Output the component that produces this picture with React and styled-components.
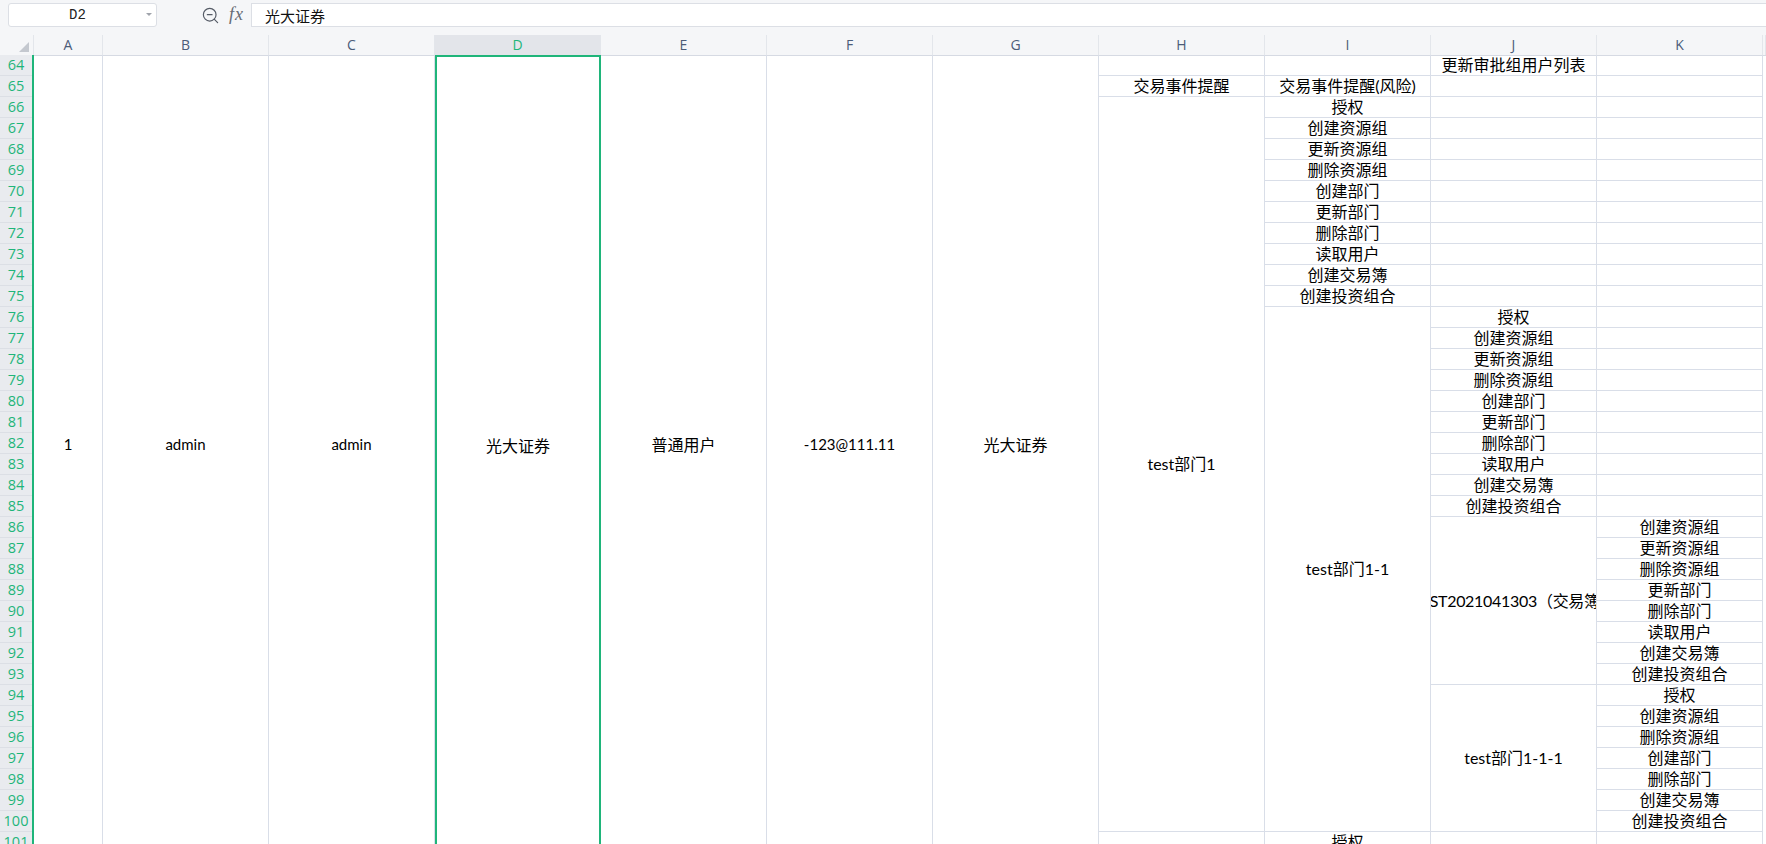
import React from 'react';
import styled, { createGlobalStyle } from 'styled-components';
import { ZoomOut } from 'lucide-react';

const ROW_H = 21;
const GREEN = '#1fb57a';
const GRID = '#d9dee8';

const GlobalStyle = createGlobalStyle`
  html, body {
    margin: 0;
    padding: 0;
    background: #fff;
    overflow: hidden;
  }
  body {
    font-family: "Lato", "Noto Sans CJK SC", sans-serif;
  }
`;

const Page = styled.div`
  width: 1766px;
  height: 844px;
  overflow: hidden;
  background: #fff;
  display: flex;
  flex-direction: column;
`;

const FormulaBar = styled.div`
  height: 35px;
  flex: none;
  box-sizing: border-box;
  padding-top: 3px;
  background: #f5f6f8;
  display: flex;
  align-items: flex-start;
`;

const NameBox = styled.div`
  margin-left: 8px;
  width: 149px;
  height: 24px;
  box-sizing: border-box;
  background: #fff;
  border: 1px solid #dcdfe5;
  border-radius: 3px;
  display: flex;
  align-items: center;
  padding-right: 4px;
`;

const NameText = styled.span`
  flex: 1;
  text-align: center;
  font-family: "Liberation Mono", "DejaVu Sans Mono", monospace;
  font-size: 14px;
  color: #222;
`;

const Caret = styled.span`
  width: 0;
  height: 0;
  border-left: 3px solid transparent;
  border-right: 3px solid transparent;
  border-top: 3px solid #a0a4ab;
  margin-top: -2px;
`;

const ToolIcon = styled.span`
  margin-left: 44px;
  height: 24px;
  display: flex;
  align-items: center;
  color: #555b66;
`;

const Fx = styled.span`
  margin-left: 9px;
  height: 24px;
  line-height: 22px;
  font-family: "Liberation Serif", "DejaVu Serif", serif;
  font-style: italic;
  font-size: 18px;
  letter-spacing: 1px;
  color: #666b74;
`;

const FormulaInput = styled.div`
  margin-left: 7px;
  margin-right: -10px;
  flex: 1;
  height: 24px;
  box-sizing: border-box;
  background: #fff;
  border: 1px solid #dcdfe5;
  padding-left: 13px;
  display: flex;
  align-items: center;
  font-family: "Noto Sans CJK SC", sans-serif;
  font-size: 15px;
  color: #111;
`;

const HeaderRow = styled.div`
  height: 20px;
  flex: none;
  display: flex;
  background: #f5f6f8;
  border-bottom: 1px solid #d6dae3;
`;

const Corner = styled.div`
  width: 34px;
  flex: none;
  position: relative;
  border-right: 1px solid #e3e6eb;
  box-sizing: border-box;
`;

const CornerMark = styled.span`
  position: absolute;
  right: 4px;
  bottom: 3px;
  width: 0;
  height: 0;
  border-left: 10px solid transparent;
  border-bottom: 10px solid #c4c8cf;
`;

const ColHead = styled.div`
  width: ${(p) => (p.$w ? `${p.$w}px` : 'auto')};
  flex: ${(p) => (p.$w ? 'none' : '1')};
  box-sizing: border-box;
  border-right: 1px solid #e3e6eb;
  background: ${(p) => (p.$active ? '#e3e5ea' : 'transparent')};
  color: ${(p) => (p.$active ? GREEN : '#4c5c78')};
  font-family: "Open Sans", sans-serif;
  font-size: 14px;
  line-height: 20px;
  text-align: center;
`;

const Sheet = styled.div`
  flex: 1;
  display: flex;
  overflow: hidden;
  margin-top: -1px;
`;

const RowHeads = styled.div`
  width: 34px;
  flex: none;
  box-sizing: border-box;
  background: #e9ebef;
  border-right: 2px solid ${GREEN};
  display: flex;
  flex-direction: column;
`;

const RowNum = styled.div`
  height: ${ROW_H}px;
  flex: none;
  box-sizing: border-box;
  border-bottom: 1px solid #dcdfe5;
  color: ${GREEN};
  font-family: "Open Sans", sans-serif;
  font-size: 14.5px;
  line-height: 20px;
  text-align: center;
`;

const Column = styled.div`
  width: ${(p) => (p.$w ? `${p.$w}px` : 'auto')};
  flex: ${(p) => (p.$w ? 'none' : '1')};
  display: flex;
  flex-direction: column;
`;

const Cell = styled.div`
  height: ${(p) => p.$span * ROW_H}px;
  flex: none;
  box-sizing: border-box;
  border-right: 1px solid ${GRID};
  border-bottom: 1px solid ${GRID};
  display: flex;
  align-items: center;
  justify-content: center;
  overflow: hidden;
  white-space: nowrap;
  font-size: 16px;
  line-height: 20px;
  letter-spacing: ${(p) => (p.$tight ? '-0.3px' : 'normal')};
  color: #000;
`;

const TallCell = styled.div`
  height: ${38 * ROW_H}px;
  flex: none;
  box-sizing: border-box;
  padding-bottom: ${ROW_H}px;
  border-right: 1px solid ${GRID};
  display: flex;
  align-items: center;
  justify-content: center;
  white-space: nowrap;
  font-size: ${(p) => (p.$cjk ? 16 : 15)}px;
  color: #000;
`;

const SelectedCell = styled(TallCell)`
  border: 2px solid ${GREEN};
  border-bottom: none;
`;

const letters = ['A', 'B', 'C', 'D', 'E', 'F', 'G', 'H', 'I', 'J', 'K'];
const widths = [69, 166, 166, 166, 166, 166, 166, 166, 166, 166, 166];

const rows = Array.from({ length: 38 }, (_, i) => 64 + i);

const leftCols = [
  { text: '1' },
  { text: 'admin' },
  { text: 'admin' },
  { text: '光大证券', cjk: true, selected: true },
  { text: '普通用户', cjk: true },
  { text: '-123@111.11' },
  { text: '光大证券', cjk: true },
];

const perms10 = ['授权', '创建资源组', '更新资源组', '删除资源组', '创建部门', '更新部门', '删除部门', '读取用户', '创建交易簿', '创建投资组合'];
const perms8 = ['创建资源组', '更新资源组', '删除资源组', '更新部门', '删除部门', '读取用户', '创建交易簿', '创建投资组合'];
const perms7 = ['授权', '创建资源组', '删除资源组', '创建部门', '删除部门', '创建交易簿', '创建投资组合'];

const one = (t) => ({ span: 1, text: t });
const blanks = (n) => Array.from({ length: n }, () => one(''));

const rightCols = [
  [one(''), one('交易事件提醒'), { span: 35, text: 'test部门1' }, one('')],
  [one(''), one('交易事件提醒(风险)'), ...perms10.map(one), { span: 25, text: 'test部门1-1' }, one('授权')],
  [
    one('更新审批组用户列表'),
    ...blanks(11),
    ...perms10.map(one),
    { span: 8, text: 'TEST2021041303（交易簿）', tight: true },
    { span: 7, text: 'test部门1-1-1' },
    one(''),
  ],
  [...blanks(22), ...perms8.map(one), ...perms7.map(one), one('')],
];

export default function App() {
  return (
    <Page>
      <GlobalStyle />
      <FormulaBar>
        <NameBox>
          <NameText>D2</NameText>
          <Caret />
        </NameBox>
        <ToolIcon>
          <ZoomOut size={19} strokeWidth={1.5} />
        </ToolIcon>
        <Fx>fx</Fx>
        <FormulaInput>光大证券</FormulaInput>
      </FormulaBar>

      <HeaderRow>
        <Corner>
          <CornerMark />
        </Corner>
        {letters.map((l, i) => (
          <ColHead key={l} $w={widths[i]} $active={l === 'D'}>
            {l}
          </ColHead>
        ))}
        <ColHead />
      </HeaderRow>

      <Sheet>
        <RowHeads>
          {rows.map((r) => (
            <RowNum key={r}>{r}</RowNum>
          ))}
        </RowHeads>

        {leftCols.map((c, i) => (
          <Column key={letters[i]} $w={widths[i]}>
            {c.selected ? (
              <SelectedCell $cjk>{c.text}</SelectedCell>
            ) : (
              <TallCell $cjk={c.cjk}>{c.text}</TallCell>
            )}
          </Column>
        ))}

        {rightCols.map((cells, ci) => (
          <Column key={letters[7 + ci]} $w={widths[7 + ci]}>
            {cells.map((c, k) => (
              <Cell key={k} $span={c.span} $tight={c.tight}>
                {c.text}
              </Cell>
            ))}
          </Column>
        ))}
        <Column />
      </Sheet>
    </Page>
  );
}
